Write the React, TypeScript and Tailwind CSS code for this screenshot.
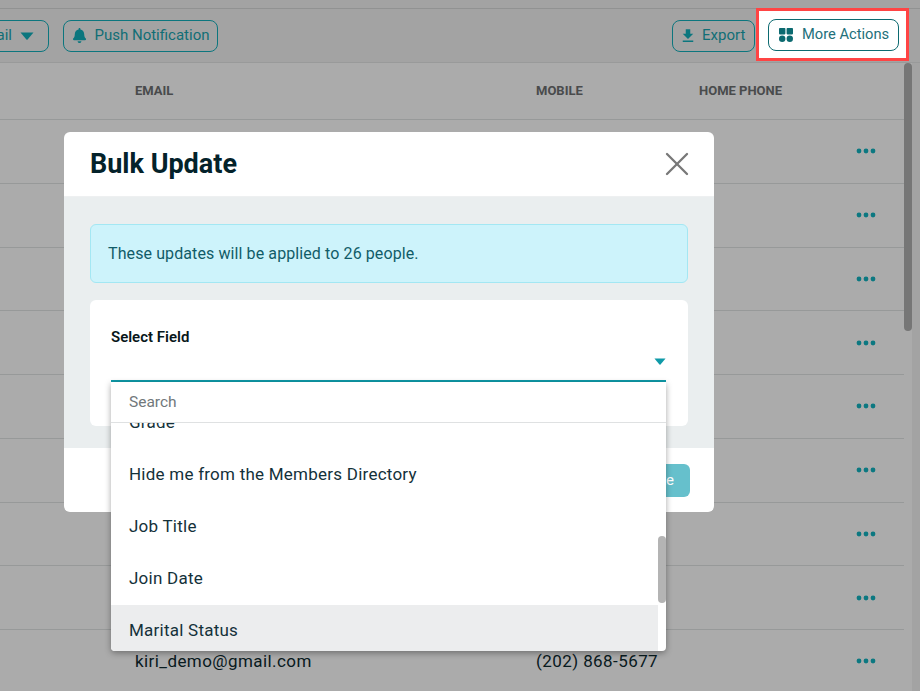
import { X } from 'lucide-react'
import { FaBell } from 'react-icons/fa'
import { MdFileDownload } from 'react-icons/md'

const rows = [
  { email: '', mobile: '' },
  { email: '', mobile: '' },
  { email: '', mobile: '' },
  { email: '', mobile: '' },
  { email: '', mobile: '' },
  { email: '', mobile: '' },
  { email: '', mobile: '' },
  { email: '', mobile: '' },
  { email: 'kiri_demo@gmail.com', mobile: '(202) 868-5677' }
]

function Dots() {
  return (
    <svg width="20" height="6" viewBox="0 0 20 6" className="text-[#13b4c0]">
      <circle cx="3" cy="3" r="2.4" fill="currentColor" />
      <circle cx="10" cy="3" r="2.4" fill="currentColor" />
      <circle cx="17" cy="3" r="2.4" fill="currentColor" />
    </svg>
  )
}

function Caret({ className }: { className: string }) {
  return (
    <svg width="14" height="8" viewBox="0 0 14 8" className={className}>
      <path d="M0.5 0.5h13L7.6 7.4a0.8 0.8 0 0 1-1.2 0z" fill="currentColor" />
    </svg>
  )
}

function ActionsIcon() {
  return (
    <svg width="14" height="14" viewBox="0 0 14 14" fill="#0c6a70" className="shrink-0">
      <rect x="0" y="0" width="6.4" height="6.4" rx="0.8" />
      <rect x="7.6" y="0" width="6.4" height="6.4" rx="0.8" />
      <circle cx="3.2" cy="10.8" r="3.2" />
      <circle cx="10.8" cy="10.8" r="3.2" />
    </svg>
  )
}

function Toolbar() {
  return (
    <div className="flex h-[54px] items-center justify-between border-b border-[#e4e6e6] bg-[#f3f4f4] pr-[165px] text-[15px] text-[#1aa5b0]">
      <div className="flex gap-[14px]">
        <button className="-ml-[30px] flex h-8 w-[79px] items-center justify-end gap-2 rounded-lg border border-[#13b0bc] pr-[14px]">
          Email
          <Caret className="text-[#13b0bc]" />
        </button>
        <button className="flex h-8 w-[155px] items-center justify-center gap-[8px] rounded-lg border border-[#13b0bc]">
          <FaBell className="h-[15px] w-[15px] text-[#13b0bc]" />
          Push Notification
        </button>
      </div>
      <button className="flex h-8 w-[83px] items-center gap-[5px] rounded-lg border border-[#13b0bc] pl-[6px]">
        <MdFileDownload className="h-[18px] w-[18px] text-[#13b0bc]" />
        Export
      </button>
    </div>
  )
}

function Table() {
  return (
    <div className="flex min-h-0 flex-1">
      <div className="w-[904px] bg-white">
        <div className="grid h-[57px] grid-cols-[135px_401px_163px_1fr] items-center border-b border-[#e2e4e4] text-[13px] font-bold text-[#6e7072]">
          <span />
          <span>EMAIL</span>
          <span>MOBILE</span>
          <span>HOME PHONE</span>
        </div>
        {rows.map((row, i) => (
          <div
            key={i}
            className="grid h-[63.75px] grid-cols-[135px_401px_163px_1fr_48px] items-center border-b border-[#e2e4e4] text-[17px] tracking-[0.42px] text-[#0d2a30]"
          >
            <span />
            <span>{row.email}</span>
            <span>{row.mobile}</span>
            <span />
            <span className="flex">
              <Dots />
            </span>
          </div>
        ))}
      </div>
      <div className="relative w-2 bg-white">
        <div className="h-[268px] rounded-full bg-[#b1b1b1]" />
      </div>
    </div>
  )
}

function FieldDropdown() {
  return (
    <div className="absolute left-0 right-0 top-[calc(100%+2px)] z-10 h-[269px] overflow-hidden rounded-b bg-white text-[17px] tracking-[0.24px] text-[#14313a] shadow-[0_2px_6px_rgba(0,0,0,0.35)]">
      <div className="flex h-[41px] items-center border-b border-[#dfe1e2] bg-white pl-[18px] pt-[2px] text-[15.5px] tracking-normal text-[#71787b]">
        Search
      </div>
      <div className="h-[228px] overflow-hidden pr-2">
        <div className="-mt-[26px]">
          <div className="flex h-[52px] items-center pl-[18px]">Grade</div>
          <div className="flex h-[52px] items-center pl-[18px]">Hide me from the Members Directory</div>
          <div className="flex h-[52px] items-center pl-[18px]">Job Title</div>
          <div className="flex h-[52px] items-center pl-[18px]">Join Date</div>
          <div className="flex h-[52px] items-center bg-[#ecedee] pl-[18px]">Marital Status</div>
        </div>
      </div>
      <div className="absolute right-0 top-[154px] h-[67px] w-[8px] rounded-full bg-[#b4b4b4]" />
    </div>
  )
}

function BulkUpdateModal() {
  return (
    <div className="absolute left-[64px] top-[132px] flex h-[380px] w-[650px] flex-col rounded-md bg-white">
      <div className="flex h-[65px] shrink-0 items-center justify-between border-b border-[#eef0f1] pl-[26px] pr-[17px]">
        <h2 className="text-[27px] font-bold text-[#04222a]">Bulk Update</h2>
        <X className="h-[40px] w-[40px] text-[#787878]" strokeWidth={1.4} />
      </div>
      <div className="flex h-[251px] shrink-0 flex-col gap-[17px] bg-[#eaeeef] px-[26px] pt-[27px]">
        <div className="flex h-[59px] items-center rounded-md border border-[#a3e7f3] bg-[#cdf3fb] pl-[17px] text-[16px] tracking-[0.1px] text-[#115c68]">
          These updates will be applied to 26 people.
        </div>
        <div className="h-[126px] rounded-md bg-white pl-[21px] pr-[22px] pt-[27px]">
          <div className="text-[15px] font-semibold leading-[20px] text-[#08161a]">Select Field</div>
          <div className="relative flex h-[35px] items-center justify-end border-b-2 border-[#0f9aa8]">
            <Caret className="mb-[4px] h-[7px] w-[12px] text-[#0f9aa8]" />
            <FieldDropdown />
          </div>
        </div>
      </div>
      <div className="flex flex-1 items-center justify-end pr-[24px]">
        <button className="h-[33px] rounded-md bg-[#66c0cc] px-[16px] text-[15px] text-white">Update</button>
      </div>
    </div>
  )
}

export default function App() {
  return (
    <div className="relative flex h-[691px] w-[920px] flex-col overflow-hidden bg-[#f3f4f4] font-['Roboto',sans-serif]">
      <div className="h-[9px] shrink-0 border-b border-[#d8dada] bg-[#f3f4f4]" />
      <Toolbar />
      <Table />
      <div className="absolute inset-0 bg-black/[.33]" />
      <div className="absolute left-[756px] top-2 flex h-[53px] w-[153px] items-center justify-end border-[3px] border-[#ff4444] bg-white pr-[7px]">
        <button className="flex h-8 w-[131px] items-center gap-[9px] rounded-lg border border-[#0c6a70] pl-[10px] text-[14.7px] text-[#22707a]">
          <ActionsIcon />
          More Actions
        </button>
      </div>
      <BulkUpdateModal />
    </div>
  )
}
